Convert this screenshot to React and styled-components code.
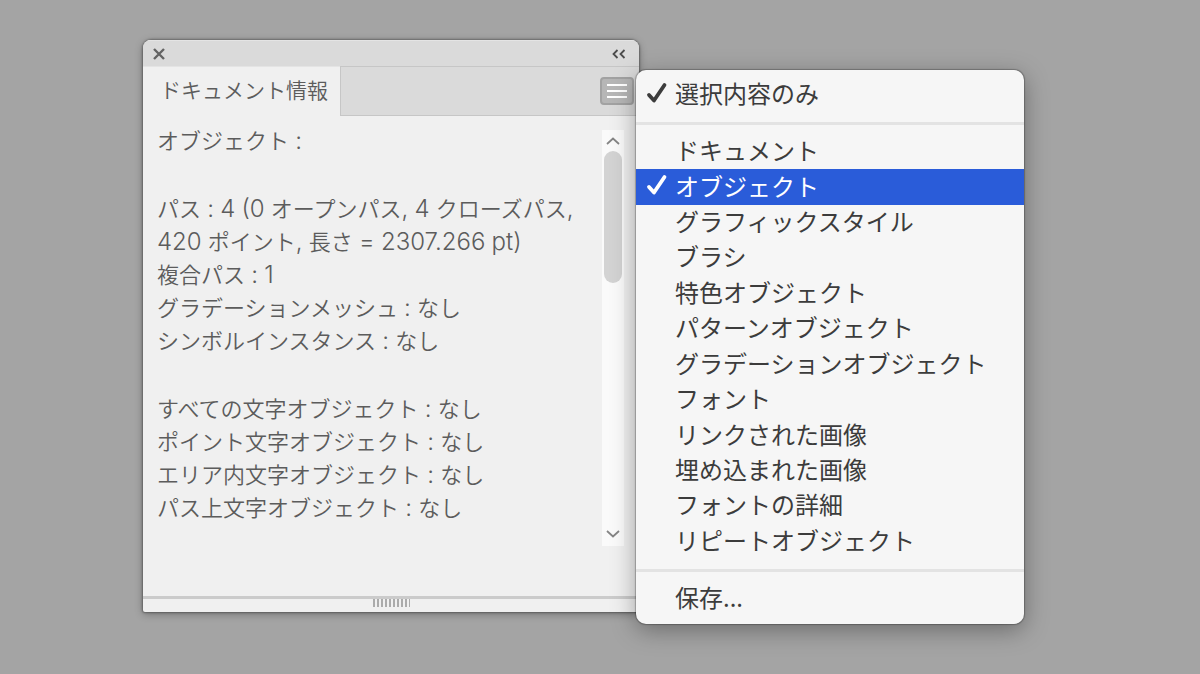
import React, { useState } from 'react';
import styled, { createGlobalStyle, css } from 'styled-components';

const colors = {
  desktop: '#a4a4a4',
  chrome: '#dadada',
  panel: '#f0f0f0',
  line: '#c6c6c6',
  panelText: '#5c5c5c',
  menu: '#f6f6f6',
  menuText: '#3c3c3c',
  highlight: '#2a5cd9',
};

const GlobalStyle = createGlobalStyle`
  *, *::before, *::after {
    box-sizing: border-box;
  }

  body {
    margin: 0;
    background: ${colors.desktop};
    font-family: 'Noto Sans CJK JP', sans-serif;
  }

  button {
    margin: 0;
    padding: 0;
    border: 0;
    background: none;
    color: inherit;
    font: inherit;
    cursor: default;
  }
`;

const Desktop = styled.main`
  display: flex;
  align-items: flex-start;
  min-height: 100vh;
  padding: 40px 176px 40px 143px;
`;

const Panel = styled.section`
  flex: 496 1 0;
  min-width: 0;
  overflow: hidden;
  border-radius: 8px 8px 2px 2px;
  background: ${colors.panel};
  color: ${colors.panelText};
  box-shadow: 0 0 2px 1px rgba(0, 0, 0, 0.3), 0 2px 8px rgba(0, 0, 0, 0.3);
`;

const TitleBar = styled.header`
  display: flex;
  align-items: center;
  justify-content: space-between;
  height: 26px;
  padding: 1px 13px 0 8px;
  border-top: 1px solid #e4e4e4;
  background: ${colors.chrome};
`;

const IconButton = styled.button`
  display: flex;
  align-items: center;
  justify-content: center;
`;

const TabBar = styled.div`
  display: flex;
  justify-content: space-between;
  height: 50px;
`;

const Tab = styled.button`
  flex: none;
  padding: 0 12px 6px 17px;
  border-top: 1px solid #e4e4e4;
  font-size: 21px;
  font-weight: 350;
  line-height: 42px;
`;

const TabFiller = styled.div`
  display: flex;
  flex: 1;
  align-items: center;
  justify-content: flex-end;
  padding-right: 5px;
  border: solid ${colors.line};
  border-width: 1px 0 1px 1px;
  background: ${colors.chrome};
`;

const FlyoutButton = styled(IconButton)`
  width: 34px;
  height: 28px;
  border: 2px solid #a2a2a2;
  border-radius: 4px;
  background: #b6b6b6;
`;

const PanelBody = styled.div`
  display: flex;
  justify-content: space-between;
  padding: 9px 15px 50px 14px;
`;

const Info = styled.div`
  display: flex;
  flex-direction: column;
  gap: 35px;
  font-family: Inter, 'Noto Sans CJK JP', sans-serif;
  font-size: 22px;
  font-weight: 350;
  line-height: 33px;

  p {
    margin: 0;
  }
`;

const Latin = styled.span`
  font-size: 24px;
  line-height: 1;
`;

const ScrollBar = styled.div`
  display: flex;
  flex: none;
  flex-direction: column;
  justify-content: space-between;
  width: 22px;
  min-height: 416px;
  margin-top: 5px;
  padding: 0 2px 2px;
  background: #fafafa;
`;

const ScrollTrack = styled.div`
  flex: 1;
`;

const ScrollThumb = styled.div`
  height: 132px;
  border-radius: 9px;
  background: #d3d3d3;
`;

const ScrollArrow = styled(IconButton)`
  height: 21px;
`;

const ResizeBar = styled.footer`
  display: flex;
  justify-content: center;
  height: 16px;
  border-top: 3px solid #cbcbcb;
`;

const Grip = styled.span`
  width: 37px;
  height: 8px;
  background: repeating-linear-gradient(90deg, #ababab 0 2px, transparent 2px 4px);
`;

const Menu = styled.div`
  display: flex;
  flex: 388 1 0;
  flex-direction: column;
  min-width: 0;
  min-height: 554px;
  margin: 30px 0 0 -3px;
  padding: 7px 0 8px;
  border-radius: 10px;
  background: ${colors.menu};
  color: ${colors.menuText};
  box-shadow: 0 0 1px 1px rgba(0, 0, 0, 0.25), 0 6px 24px rgba(0, 0, 0, 0.35);
  z-index: 1;
`;

const MenuGroup = styled.div`
  display: flex;
  flex: ${({ $grow }) => ($grow ? '1 0 auto' : 'none')};
  flex-direction: column;
`;

const MenuRow = styled.button`
  display: grid;
  flex: 1 0 auto;
  grid-template-columns: 29px 1fr;
  align-items: center;
  padding: 0 0 4px 10px;
  font-size: 24px;
  line-height: 31px;
  text-align: left;
  white-space: nowrap;

  ${({ $active }) =>
    $active &&
    css`
      background: ${colors.highlight};
      color: #fff;
    `}
`;

const MenuLabel = styled.span`
  grid-column: 2;
`;

const Separator = styled.hr`
  flex: none;
  width: 100%;
  height: 3px;
  margin: 10px 0 9px;
  border: 0;
  background: #e3e3e3;
`;

const infoGroups = [
  ['オブジェクト :'],
  [
    'パス : 4 (0 オープンパス, 4 クローズパス, 420 ポイント, 長さ = 2307.266 pt)',
    '複合パス : 1',
    'グラデーションメッシュ : なし',
    'シンボルインスタンス : なし',
  ],
  [
    'すべての文字オブジェクト : なし',
    'ポイント文字オブジェクト : なし',
    'エリア内文字オブジェクト : なし',
    'パス上文字オブジェクト : なし',
  ],
];

const categories = [
  'ドキュメント',
  'オブジェクト',
  'グラフィックスタイル',
  'ブラシ',
  '特色オブジェクト',
  'パターンオブジェクト',
  'グラデーションオブジェクト',
  'フォント',
  'リンクされた画像',
  '埋め込まれた画像',
  'フォントの詳細',
  'リピートオブジェクト',
];

// Figures and Latin words are set a little larger than the kana around them
const InfoLine = ({ text }) => (
  <p>
    {text
      .split(/([\w.,:()=]+)/)
      .filter(Boolean)
      .map((run, i) => (/^[\w.,:()=]/.test(run) ? <Latin key={i}>{run}</Latin> : run))}
  </p>
);

const Stroke = ({ width, height, d, weight = 2, color = 'currentColor', round }) => (
  <svg width={width} height={height} fill="none" aria-hidden="true">
    <path
      d={d}
      stroke={color}
      strokeWidth={weight}
      strokeLinecap={round ? 'round' : 'butt'}
      strokeLinejoin={round ? 'round' : 'miter'}
    />
  </svg>
);

const Check = () => (
  <Stroke width={22} height={22} d="M3 13 L8 18.5 L18.5 3" weight={3.8} round />
);

const MenuItem = ({ label, checked, active, onClick }) => (
  <MenuRow
    type="button"
    role="menuitemcheckbox"
    aria-checked={Boolean(checked)}
    $active={active}
    onClick={onClick}
  >
    {checked && <Check />}
    <MenuLabel>{label}</MenuLabel>
  </MenuRow>
);

const App = () => {
  const [selectionOnly, setSelectionOnly] = useState(true);
  const [category, setCategory] = useState('オブジェクト');

  return (
    <>
      <GlobalStyle />
      <Desktop lang="ja">
        <Panel>
          <TitleBar>
            <IconButton type="button" aria-label="閉じる">
              <Stroke width={16} height={16} d="M3 3 L13 13 M13 3 L3 13" weight={2.4} color="#636363" />
            </IconButton>
            <IconButton type="button" aria-label="折りたたむ">
              <Stroke width={15} height={12} d="M6.5 2 L2.5 6 L6.5 10 M13.5 2 L9.5 6 L13.5 10" weight={1.8} color="#4c4c4c" />
            </IconButton>
          </TitleBar>
          <TabBar>
            <Tab type="button">ドキュメント情報</Tab>
            <TabFiller>
              <FlyoutButton type="button" aria-label="パネルメニュー" aria-expanded="true">
                <Stroke width={20} height={16} d="M0 2 H20 M0 8 H20 M0 14 H20" color="#fff" />
              </FlyoutButton>
            </TabFiller>
          </TabBar>
          <PanelBody>
            <Info>
              {infoGroups.map(lines => (
                <div key={lines[0]}>
                  {lines.map(line => (
                    <InfoLine key={line} text={line} />
                  ))}
                </div>
              ))}
            </Info>
            <ScrollBar>
              <ScrollArrow type="button" aria-label="上へスクロール">
                <Stroke width={16} height={10} d="M2 8 L8 2.5 L14 8" weight={1.8} color="#858585" />
              </ScrollArrow>
              <ScrollTrack>
                <ScrollThumb />
              </ScrollTrack>
              <ScrollArrow type="button" aria-label="下へスクロール">
                <Stroke width={16} height={10} d="M2 2 L8 7.5 L14 2" weight={1.8} color="#858585" />
              </ScrollArrow>
            </ScrollBar>
          </PanelBody>
          <ResizeBar>
            <Grip />
          </ResizeBar>
        </Panel>

        <Menu role="menu">
          <MenuGroup>
            <MenuItem
              label="選択内容のみ"
              checked={selectionOnly}
              onClick={() => setSelectionOnly(!selectionOnly)}
            />
          </MenuGroup>
          <Separator />
          <MenuGroup $grow>
            {categories.map(name => (
              <MenuItem
                key={name}
                label={name}
                checked={name === category}
                active={name === category}
                onClick={() => setCategory(name)}
              />
            ))}
          </MenuGroup>
          <Separator />
          <MenuGroup>
            <MenuRow type="button" role="menuitem">
              <MenuLabel>保存...</MenuLabel>
            </MenuRow>
          </MenuGroup>
        </Menu>
      </Desktop>
    </>
  );
};

export default App;
